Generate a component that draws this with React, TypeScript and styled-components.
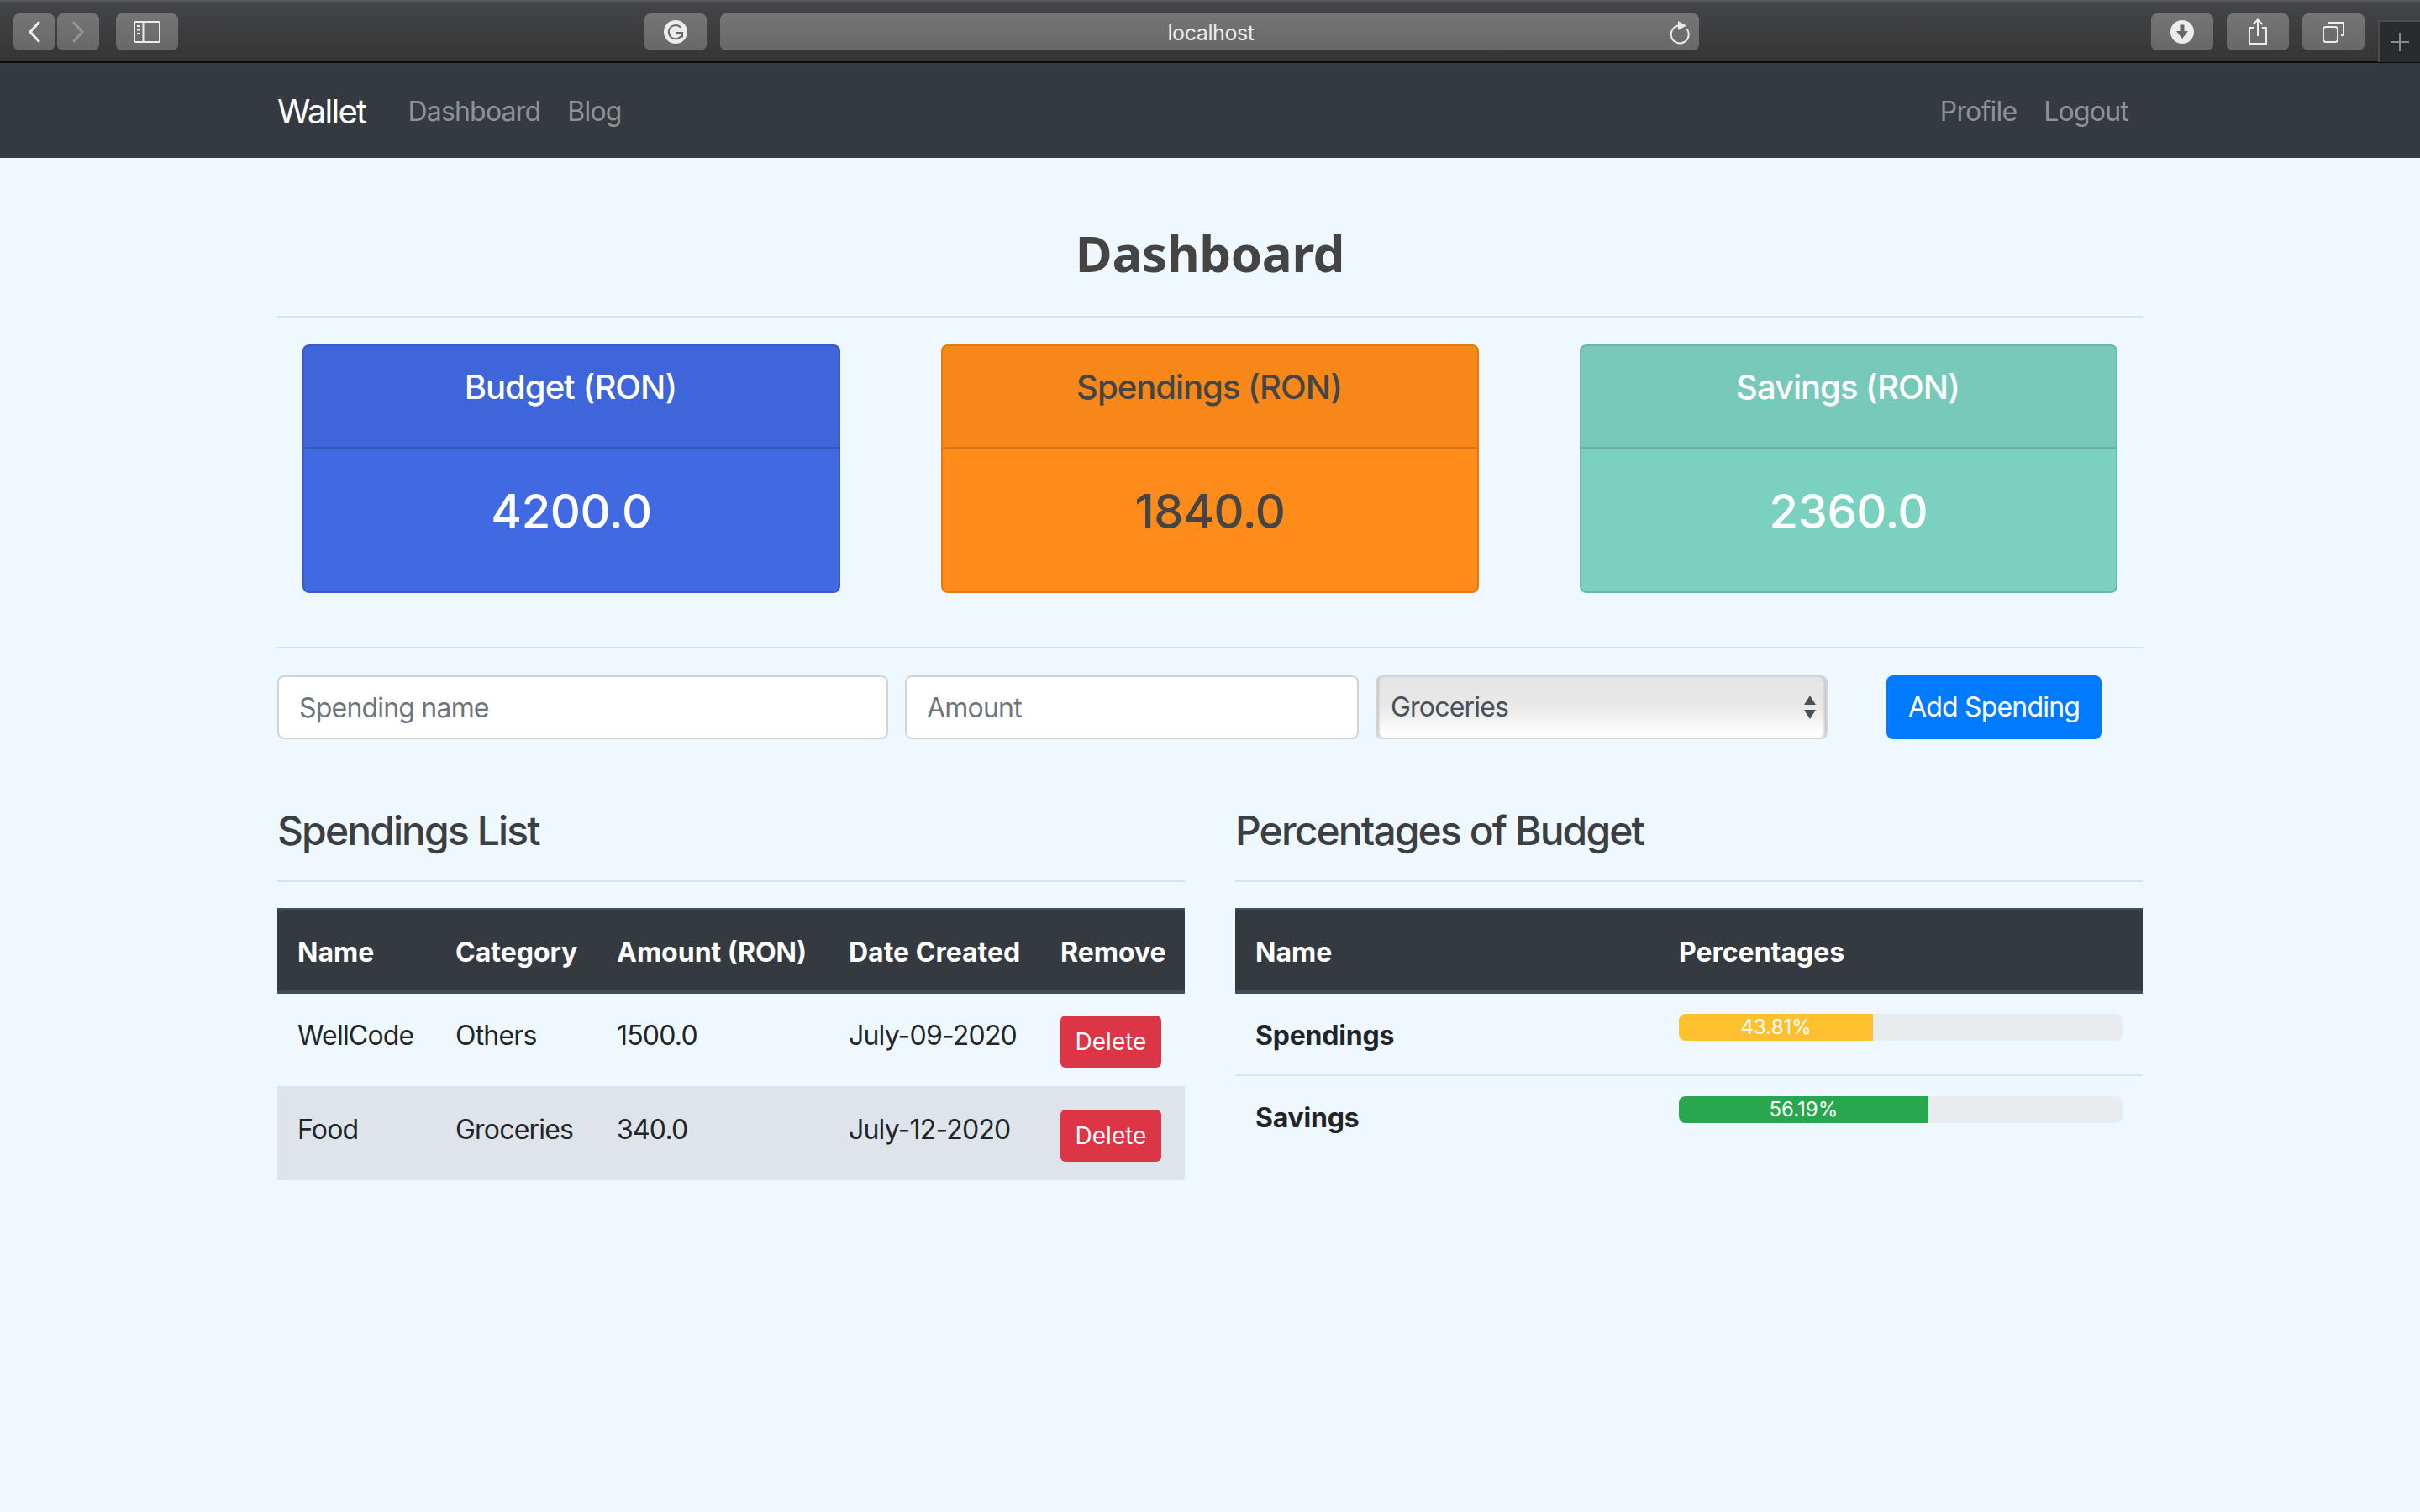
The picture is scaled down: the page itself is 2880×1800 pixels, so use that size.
import React from 'react'
import styled, {createGlobalStyle} from 'styled-components'

const GlobalStyle = createGlobalStyle`
  html, body {
    margin: 0;
    padding: 0;
    background: #f0f8ff;
  }
  body {
    font-family: Inter, "Liberation Sans", sans-serif;
    font-size: 32px;
    line-height: 48px;
    letter-spacing: -0.8px;
    color: #212529;
    min-height: 1800px;
  }
  * {
    box-sizing: border-box;
  }
`

const BrowserBar = styled.div`
  display: flex;
  height: 75px;
  padding: 16px 0 0 16px;
  background: linear-gradient(#444548, #353535);
  border-top: 2px solid #5b5b5d;
  border-bottom: 2px solid #0c0c0c;
`

const BarButton = styled.div<{$width: number, $left?: number}>`
  display: flex;
  align-items: center;
  justify-content: center;
  width: ${(props) => props.$width}px;
  height: 44px;
  margin-top: -2px;
  margin-left: ${(props) => props.$left || 0}px;
  border-radius: 7px;
  background: linear-gradient(#757575, #686868);
`

const UrlBar = styled(BarButton)`
  position: relative;
  padding: 2px 0 0 3px;
  font-size: 25px;
  letter-spacing: -0.4px;
  color: #ececec;
`

const ReloadIcon = styled.svg`
  position: absolute;
  right: 10px;
  top: 8px;
`

const NewTab = styled.div`
  display: flex;
  align-items: center;
  justify-content: center;
  width: 50px;
  height: 50px;
  margin-top: 6px;
  margin-left: 16px;
  background: #2a2b2d;
  border-top: 2px solid #4c4c4e;
  border-left: 2px solid #4c4c4e;
`

const Navbar = styled.nav`
  display: flex;
  align-items: center;
  height: 113px;
  padding: 3px 315px 0 330px;
  background: #343a40;
`

const Brand = styled.a`
  font-size: 40px;
  color: #fff;
  margin-right: 50px;
  letter-spacing: -1.7px;
`

const NavLink = styled.a`
  color: #8f9295;
  margin-right: 32px;
  letter-spacing: -0.8px;
`

const NavSpacer = styled.div`
  flex: 1;
`

const Container = styled.main`
  width: 2220px;
  margin: 0 auto;
`

const Title = styled.h1`
  margin: 0;
  height: 188px;
  padding-top: 68px;
  text-align: center;
  font-family: "Noto Sans", sans-serif;
  font-size: 60px;
  line-height: 90px;
  font-weight: 700;
  letter-spacing: -0.4px;
  color: #444;
`

const Rule = styled.hr`
  height: 2px;
  margin: 0;
  border: 0;
  background: #d9e1ea;
`

const CardGrid = styled.section`
  display: grid;
  grid-template-columns: repeat(3, 640px);
  gap: 120px;
  padding: 32px 30px 64px;
`

const Card = styled.div<{$bg: string, $ink: string}>`
  height: 296px;
  border: 2px solid rgba(0, 0, 0, 0.125);
  border-radius: 8px;
  background: ${(props) => props.$bg};
  color: ${(props) => props.$ink};
  text-align: center;
  overflow: hidden;
`

const CardHeader = styled.div`
  height: 122px;
  padding: 25px 2px 0 0;
  background: rgba(0, 0, 0, 0.03);
  border-bottom: 2px solid rgba(0, 0, 0, 0.125);
  font-size: 40px;
  line-height: 48px;
  font-weight: 500;
  letter-spacing: -1px;
`

const CardValue = styled.div`
  padding-top: 42px;
  font-size: 56px;
  line-height: 67px;
  font-weight: 500;
  letter-spacing: -0.4px;
`

const SpendingForm = styled.form`
  display: flex;
  padding-top: 32px;
`

const TextInput = styled.input<{$width: number}>`
  width: ${(props) => props.$width}px;
  height: 76px;
  margin-right: 20px;
  padding: 0 24px;
  border: 2px solid #ced4da;
  border-radius: 8px;
  background: #fff;
  font: inherit;
  letter-spacing: inherit;
  color: #495057;
  &::placeholder {
    color: #6c757d;
    opacity: 1;
  }
`

const SelectBox = styled.div`
  position: relative;
  width: 538px;
  height: 76px;
`

const CategorySelect = styled.select`
  appearance: none;
  width: 100%;
  height: 100%;
  padding: 0 0 0 16px;
  border: 2px solid #d0d5da;
  border-radius: 8px;
  background: linear-gradient(#e4e4e4, #e9e9e9 50%, #fff 95%);
  box-shadow: inset 4px 0 3px -2px #c4c4c4, inset -4px 0 3px -2px #c4c4c4;
  font: inherit;
  letter-spacing: inherit;
  color: #495057;
`

const SelectArrows = styled.svg`
  position: absolute;
  right: 13px;
  top: 24px;
  pointer-events: none;
`

const AddButton = styled.button`
  width: 256px;
  height: 76px;
  margin-left: 70px;
  padding: 0;
  border: 0;
  border-radius: 8px;
  background: #007bff;
  font: inherit;
  letter-spacing: inherit;
  color: #fff;
`

const Columns = styled.section`
  display: grid;
  grid-template-columns: 1080px 1080px;
  gap: 60px;
  padding-top: 80px;
`

const SectionTitle = styled.h3`
  margin: 0;
  height: 42px;
  font-size: 48px;
  line-height: 58px;
  font-weight: 500;
  color: #3c3f42;
  letter-spacing: -1.9px;
`

const SectionRule = styled(Rule)`
  margin: 46px 0 31px;
`

const Table = styled.table`
  width: 1080px;
  table-layout: fixed;
  border-collapse: collapse;
`

const HeadCell = styled.th<{$width: number}>`
  width: ${(props) => props.$width}px;
  padding: 27px 24px 21px;
  background: #343a40;
  border-top: 2px solid #454d55;
  border-bottom: 4px solid #454d55;
  color: #fff;
  text-align: left;
  font-weight: 700;
  letter-spacing: 0;
  white-space: nowrap;
  vertical-align: bottom;
`

const Cell = styled.td<{$ruled?: boolean}>`
  padding: 26px 24px 22px;
  vertical-align: top;
  white-space: nowrap;
  border-top: ${(props) => props.$ruled ? '2px solid #dee2e6' : '0'};
`

const Row = styled.tr<{$shaded?: boolean}>`
  background: ${(props) => props.$shaded ? '#dee4ea' : 'transparent'};
  ${Cell} {
    padding-top: ${(props) => props.$shaded ? 28 : 26}px;
    padding-bottom: ${(props) => props.$shaded ? 22 : 22}px;
  }
`

const BarCell = styled(Cell)`
  padding: 24px;
`

const LabelCell = styled.th<{$ruled?: boolean}>`
  padding: 26px 24px 22px;
  text-align: left;
  font-weight: 700;
  letter-spacing: -0.2px;
  vertical-align: top;
  border-top: ${(props) => props.$ruled ? '2px solid #dee2e6' : '0'};
`

const DeleteButton = styled.button`
  display: block;
  width: 120px;
  height: 62px;
  padding: 0;
  border: 0;
  border-radius: 6px;
  background: #dc3545;
  font: inherit;
  font-size: 28px;
  color: #fff;
`

const Progress = styled.div`
  display: flex;
  height: 32px;
  border-radius: 8px;
  overflow: hidden;
  background: #e9ecef;
`

const ProgressFill = styled.div<{$color: string}>`
  background: ${(props) => props.$color};
  color: #fff;
  font-size: 24px;
  line-height: 32px;
  letter-spacing: 0;
  text-align: center;
`

const cards = [
    {title: 'Budget (RON)', value: '4200.0', bg: '#4169e1', ink: '#fff'},
    {title: 'Spendings (RON)', value: '1840.0', bg: '#ff8c1a', ink: '#454545'},
    {title: 'Savings (RON)', value: '2360.0', bg: '#7bd1bf', ink: '#fff'},
]

const spendings = [
    {name: 'WellCode', category: 'Others', amount: '1500.0', date: 'July-09-2020'},
    {name: 'Food', category: 'Groceries', amount: '340.0', date: 'July-12-2020'},
]

const percentages = [
    {name: 'Spendings', value: 43.81, color: '#ffc12d'},
    {name: 'Savings', value: 56.19, color: '#28a74f'},
]

function App() {
    return (
        <>
            <GlobalStyle />
            <BrowserBar>
                <BarButton $width={49}>
                    <svg width="16" height="26" viewBox="0 0 16 26" fill="none" stroke="#f0f0f0" strokeWidth="3" strokeLinecap="round" strokeLinejoin="round">
                        <path d="M13 2 L3 13 L13 24" />
                    </svg>
                </BarButton>
                <BarButton $width={50} $left={3}>
                    <svg width="16" height="26" viewBox="0 0 16 26" fill="none" stroke="#969696" strokeWidth="3" strokeLinecap="round" strokeLinejoin="round">
                        <path d="M3 2 L13 13 L3 24" />
                    </svg>
                </BarButton>
                <BarButton $width={74} $left={20}>
                    <svg width="32" height="26" viewBox="0 0 32 26" fill="none" stroke="#ececec" strokeWidth="2">
                        <rect x="1" y="1" width="30" height="24" rx="1.5" />
                        <path d="M11.5 1 V25" />
                        <path d="M4 6 H8 M4 10.5 H8 M4 15 H8" />
                    </svg>
                </BarButton>
                <BarButton $width={74} $left={555}>
                    <svg width="28" height="28" viewBox="0 0 28 28" fill="none">
                        <circle cx="14" cy="14" r="14" fill="#ececec" />
                        <path d="M20.5 9 A8.2 8.2 0 1 0 21 18.5 M14.5 15 H22 V20.5" stroke="#666" strokeWidth="2" />
                    </svg>
                </BarButton>
                <UrlBar $width={1165} $left={16}>
                    localhost
                    <ReloadIcon width="26" height="29" viewBox="0 0 26 29" fill="none">
                        <path d="M12 6.5 A10.5 10.5 0 1 0 21.5 10.5" stroke="#ececec" strokeWidth="2" />
                        <path d="M11 1 L21 6.5 L11 12 Z" fill="#ececec" />
                    </ReloadIcon>
                </UrlBar>
                <BarButton $width={74} $left={538}>
                    <svg width="28" height="28" viewBox="0 0 28 28">
                        <circle cx="14" cy="14" r="14" fill="#ececec" />
                        <path d="M11.5 5.5 H16.5 V13 H21 L14 22 L7 13 H11.5 Z" fill="#666" />
                    </svg>
                </BarButton>
                <BarButton $width={74} $left={16}>
                    <svg width="24" height="32" viewBox="0 0 24 32" fill="none" stroke="#ececec" strokeWidth="2">
                        <path d="M7 11 H2 V30 H22 V11 H17" />
                        <path d="M12 21 V2 M6.5 7 L12 1.5 L17.5 7" />
                    </svg>
                </BarButton>
                <BarButton $width={74} $left={16}>
                    <svg width="26" height="26" viewBox="0 0 26 26" fill="none" stroke="#ececec" strokeWidth="2">
                        <rect x="1" y="7" width="17" height="18" rx="3" />
                        <path d="M7 2 H25 V17 H22" />
                    </svg>
                </BarButton>
                <NewTab>
                    <svg width="22" height="22" viewBox="0 0 22 22" stroke="#8a8a8a" strokeWidth="2">
                        <path d="M11 0 V22 M0 11 H22" />
                    </svg>
                </NewTab>
            </BrowserBar>
            <Navbar>
                <Brand>Wallet</Brand>
                <NavLink>Dashboard</NavLink>
                <NavLink>Blog</NavLink>
                <NavSpacer />
                <NavLink>Profile</NavLink>
                <NavLink>Logout</NavLink>
            </Navbar>
            <Container>
                <Title>Dashboard</Title>
                <Rule />
                <CardGrid>
                    {cards.map((card) => (
                        <Card key={card.title} $bg={card.bg} $ink={card.ink}>
                            <CardHeader>{card.title}</CardHeader>
                            <CardValue>{card.value}</CardValue>
                        </Card>
                    ))}
                </CardGrid>
                <Rule />
                <SpendingForm>
                    <TextInput $width={727} placeholder="Spending name" />
                    <TextInput $width={540} placeholder="Amount" />
                    <SelectBox>
                        <CategorySelect defaultValue="Groceries">
                            <option>Groceries</option>
                            <option>Others</option>
                        </CategorySelect>
                        <SelectArrows width="16" height="28" viewBox="0 0 16 28" fill="#4a5056">
                            <path d="M8 0 L15 11 H1 Z M1 17 H15 L8 28 Z" />
                        </SelectArrows>
                    </SelectBox>
                    <AddButton type="button">Add Spending</AddButton>
                </SpendingForm>
                <Columns>
                    <div>
                        <SectionTitle>Spendings List</SectionTitle>
                        <SectionRule />
                        <Table>
                            <thead>
                                <tr>
                                    <HeadCell $width={188}>Name</HeadCell>
                                    <HeadCell $width={192}>Category</HeadCell>
                                    <HeadCell $width={276}>Amount (RON)</HeadCell>
                                    <HeadCell $width={252}>Date Created</HeadCell>
                                    <HeadCell $width={172}>Remove</HeadCell>
                                </tr>
                            </thead>
                            <tbody>
                                {spendings.map((item, index) => (
                                    <Row key={item.name} $shaded={index === 1}>
                                        <Cell>{item.name}</Cell>
                                        <Cell>{item.category}</Cell>
                                        <Cell>{item.amount}</Cell>
                                        <Cell>{item.date}</Cell>
                                        <Cell><DeleteButton type="button">Delete</DeleteButton></Cell>
                                    </Row>
                                ))}
                            </tbody>
                        </Table>
                    </div>
                    <div>
                        <SectionTitle>Percentages of Budget</SectionTitle>
                        <SectionRule />
                        <Table>
                            <thead>
                                <tr>
                                    <HeadCell $width={504}>Name</HeadCell>
                                    <HeadCell $width={576}>Percentages</HeadCell>
                                </tr>
                            </thead>
                            <tbody>
                                {percentages.map((item, index) => (
                                    <tr key={item.name}>
                                        <LabelCell $ruled={index > 0}>{item.name}</LabelCell>
                                        <BarCell $ruled={index > 0}>
                                            <Progress>
                                                <ProgressFill $color={item.color} style={{width: `${item.value}%`}}>{item.value}%</ProgressFill>
                                            </Progress>
                                        </BarCell>
                                    </tr>
                                ))}
                            </tbody>
                        </Table>
                    </div>
                </Columns>
            </Container>
        </>
    )
}

export default App
